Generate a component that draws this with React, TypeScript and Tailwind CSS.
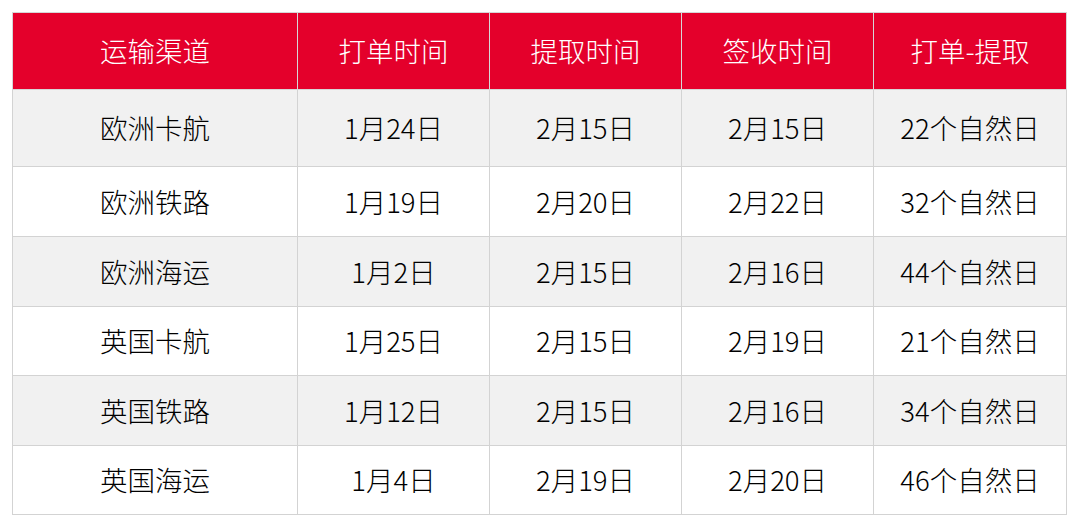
const headers = ['运输渠道', '打单时间', '提取时间', '签收时间', '打单-提取'];

const rows = [
  ['欧洲卡航', '1月24日', '2月15日', '2月15日', '22个自然日'],
  ['欧洲铁路', '1月19日', '2月20日', '2月22日', '32个自然日'],
  ['欧洲海运', '1月2日', '2月15日', '2月16日', '44个自然日'],
  ['英国卡航', '1月25日', '2月15日', '2月19日', '21个自然日'],
  ['英国铁路', '1月12日', '2月15日', '2月16日', '34个自然日'],
  ['英国海运', '1月4日', '2月19日', '2月20日', '46个自然日'],
];

const heights = ['h-[77px]', 'h-[70px]', 'h-[70px]', 'h-[69px]', 'h-[70px]', 'h-[69px]'];

export default function App() {
  return (
    <div
      className="w-[1080px] h-[526px] bg-white pt-[12px] pl-[12px]"
      style={{ fontFamily: '"Microsoft YaHei", "Noto Sans CJK SC", "Noto Sans", sans-serif' }}
    >
      <table className="border-collapse table-fixed w-[1054px] text-[27.5px] font-light text-black">
        <colgroup>
          <col className="w-[285px]" />
          <col className="w-[192px]" />
          <col className="w-[192px]" />
          <col className="w-[192px]" />
          <col className="w-[193px]" />
        </colgroup>
        <thead>
          <tr className="h-[77px] bg-[#e4002b] text-white">
            {headers.map((h, i) => (
              <th
                key={h}
                className={`font-light text-center border border-[#d6d6d6] ${i > 0 ? 'border-l-[#f3c2cb]' : ''}`}
              >
                {h}
              </th>
            ))}
          </tr>
        </thead>
        <tbody>
          {rows.map((r, ri) => (
            <tr key={r[0]} className={`${heights[ri]} ${ri % 2 === 0 ? 'bg-[#f1f1f1]' : 'bg-white'}`}>
              {r.map((c, ci) => (
                <td key={ci} className="text-center border border-[#d3d3d3] p-0">
                  {c}
                </td>
              ))}
            </tr>
          ))}
        </tbody>
      </table>
    </div>
  );
}
